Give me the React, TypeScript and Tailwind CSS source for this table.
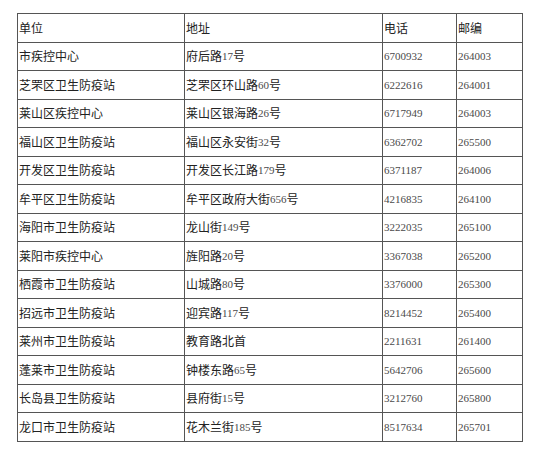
const rows = [
  ["单位", "地址", "电话", "邮编"],
  ["市疾控中心", "府后路17号", "6700932", "264003"],
  ["芝罘区卫生防疫站", "芝罘区环山路60号", "6222616", "264001"],
  ["莱山区疾控中心", "莱山区银海路26号", "6717949", "264003"],
  ["福山区卫生防疫站", "福山区永安街32号", "6362702", "265500"],
  ["开发区卫生防疫站", "开发区长江路179号", "6371187", "264006"],
  ["牟平区卫生防疫站", "牟平区政府大街656号", "4216835", "264100"],
  ["海阳市卫生防疫站", "龙山街149号", "3222035", "265100"],
  ["莱阳市疾控中心", "旌阳路20号", "3367038", "265200"],
  ["栖霞市卫生防疫站", "山城路80号", "3376000", "265300"],
  ["招远市卫生防疫站", "迎宾路117号", "8214452", "265400"],
  ["莱州市卫生防疫站", "教育路北首", "2211631", "261400"],
  ["蓬莱市卫生防疫站", "钟楼东路65号", "5642706", "265600"],
  ["长岛县卫生防疫站", "县府街15号", "3212760", "265800"],
  ["龙口市卫生防疫站", "花木兰街185号", "8517634", "265701"],
];

const widths = ["w-[167px]", "w-[198px]", "w-[74px]", "w-[66px]"];

// digits are set in a smaller serif face, like the original page
const Text = ({ value }: { value: string }) => (
  <>
    {value.split(/(\d+)/).map((part, i) =>
      /^\d+$/.test(part) ? (
        <span key={i} className="font-['Liberation_Serif',serif] text-[11px] text-[#4a4a4a]">
          {part}
        </span>
      ) : (
        <span key={i}>{part}</span>
      )
    )}
  </>
);

export default function App() {
  return (
    <div className="w-[550px] h-[449px] bg-white pt-[13px] pl-[17px] font-['Noto_Sans_CJK_SC',sans-serif] text-[12px] text-[#222]">
      <div className="w-[506px] border-l border-t border-[#555]">
        {rows.map((row, r) => (
          <div key={r} className="flex h-[28.5px] border-b border-[#555]">
            {row.map((cell, c) => (
              <div
                key={c}
                className={`${widths[c]} shrink-0 border-r border-[#555] pl-[1px] flex items-center whitespace-nowrap overflow-hidden`}
              >
                <Text value={cell} />
              </div>
            ))}
          </div>
        ))}
      </div>
    </div>
  );
}
